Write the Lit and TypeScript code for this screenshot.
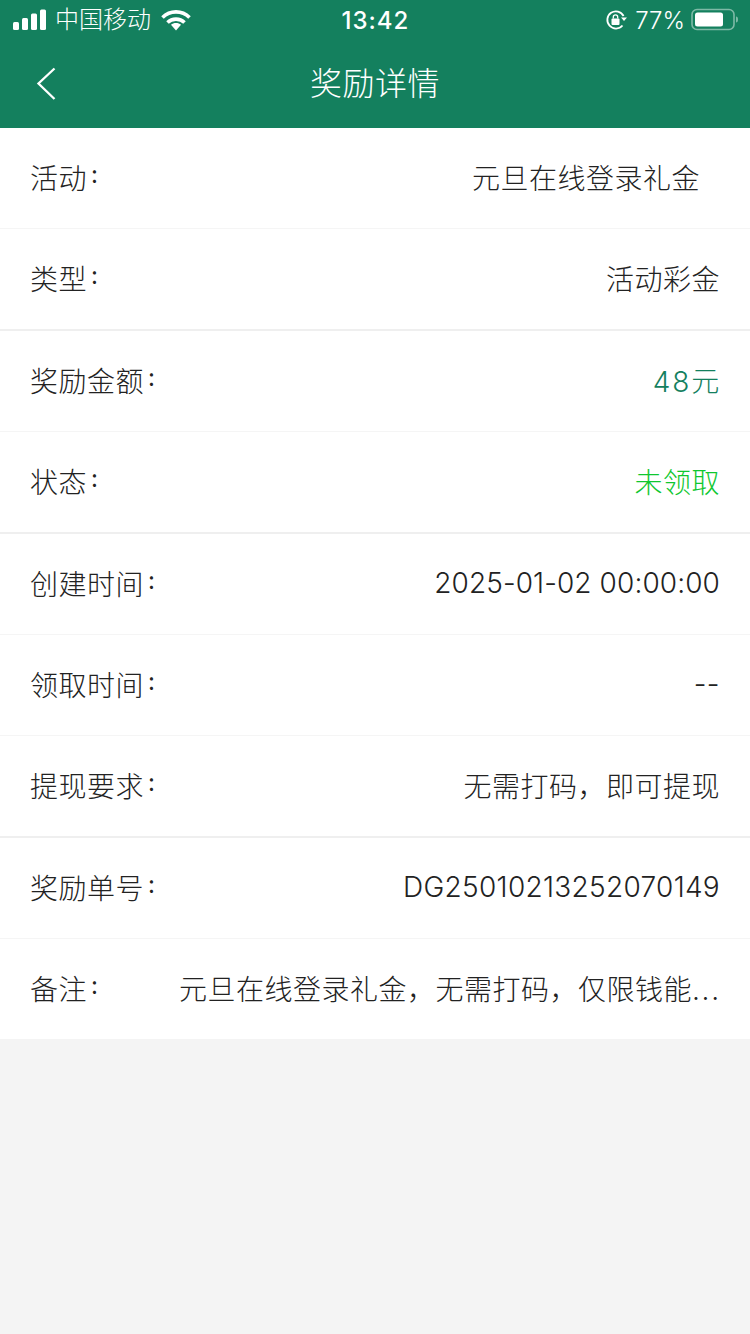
import { LitElement, html, css, svg } from "lit";
import { customElement } from "lit/decorators.js";

type Row = { label: string; value: string; tail?: string; cls?: string; sep?: string };

const rows: Row[] = [
  { label: "活动", value: "元旦在线登录礼金", cls: "inset" },
  { label: "类型", value: "活动彩金", sep: "thick" },
  { label: "奖励金额", value: "48元", cls: "green" },
  { label: "状态", value: "未领取", cls: "bright", sep: "thick" },
  { label: "创建时间", value: "2025-01-02 00:00:00", cls: "num" },
  { label: "领取时间", value: "--" },
  { label: "提现要求", value: "无需打码\uFF0C即可提现", sep: "thick" },
  { label: "奖励单号", value: "DG25010213252070149", cls: "code" },
  { label: "备注", value: "元旦在线登录礼金\uFF0C无需打码\uFF0C仅限钱能", tail: "...", sep: "none" },
];

@customElement("app-root")
export class AppRoot extends LitElement {
  static styles = css`
    :host {
      display: block;
      width: 750px;
      height: 1334px;
      background: #f4f4f4;
      font-family: "Inter", "Noto Sans CJK SC", sans-serif;
      overflow: hidden;
    }
    .header { background: #14805e; height: 128px; color: #fff; display: flex; flex-direction: column; }
    .status { height: 40px; display: flex; align-items: center; position: relative; padding: 0 12px 0 13px; font-size: 24px; font-weight: 300; }
    .status .left, .status .right { display: flex; align-items: center; }
    .status .right { margin-left: auto; }
    .carrier { margin-left: 8px; line-height: 40px; }
    .wifi { margin-left: 10px; }
    .time { position: absolute; left: 1px; right: 0; text-align: center; font-weight: 500; font-size: 24px; letter-spacing: 1px; }
    .pct { margin: 0 6px 0 8px; font-size: 24px; font-weight: 300; }
    .nav { flex: 1; position: relative; display: flex; align-items: center; justify-content: center; font-size: 32px; font-weight: 300; letter-spacing: .5px; padding-bottom: 6px; }
    .back { position: absolute; left: 36px; top: 27px; }
    .row { height: 100px; background: #fff; display: flex; align-items: center; justify-content: space-between; padding: 0 30px; font-size: 28px; font-weight: 300; letter-spacing: .5px; color: #222; border-bottom: 1px solid #f5f5f5; }
    .row.thick { border-bottom: 2px solid #efefef; }
    .row.none { border-bottom: 0; }
    .label { display: flex; align-items: center; white-space: nowrap; flex: none; margin-top: -3px; }
    .colon { font-size: 24px; font-weight: 400; margin: -4px 0 0 4px; }
    .value { white-space: nowrap; text-align: right; margin-top: -2px; }
    .dots { letter-spacing: 1.800px; margin-right: -1px; }
    .inset { margin-right: 20px; }
    .green { color: #14805e; letter-spacing: 1.800px; margin-right: -1px; }
    .bright { color: #0fc730; }
    .num { letter-spacing: .1px; }
    .code { letter-spacing: .3px; }
  `;

  private signal() {
    return svg`<svg width="34" height="22" viewBox="0 0 34 22" fill="#fff">
      <rect x="0" y="13" width="6" height="8" rx="1.500"/>
      <rect x="9" y="9" width="6" height="12" rx="1.500"/>
      <rect x="18" y="4.500" width="6" height="16.500" rx="1.500"/>
      <rect x="27" y="0.500" width="6" height="20.500" rx="1.500"/>
    </svg>`;
  }

  private wifi() {
    return svg`<svg class="wifi" width="30" height="22" viewBox="0 0 30 22" fill="none" stroke="#fff" stroke-width="3.600">
      <path d="M1.500 8.500C9 1 21 1 28.500 8.500"/>
      <path d="M6.500 13.500C11 9 19 9 23.500 13.500"/>
      <path d="M10 15.800L15 21.500L20 15.800C17.500 13.500 12.500 13.500 10 15.800Z" fill="#fff" stroke="none"/>
    </svg>`;
  }

  private lock() {
    return svg`<svg width="22" height="22" viewBox="0 0 22 22" fill="none">
      <path d="M17.500 16.500A8.600 8.600 0 1 1 18.600 7" stroke="#fff" stroke-width="1.800"/>
      <path d="M16 8.500H22L19 12Z" fill="#fff"/>
      <rect x="6.500" y="9.500" width="8" height="6.500" rx="1" fill="#fff"/>
      <path d="M8.300 9.500V8a2.200 2.200 0 0 1 4.400 0v1.500" stroke="#fff" stroke-width="1.300"/>
    </svg>`;
  }

  private battery() {
    return svg`<svg width="47" height="24" viewBox="0 0 47 24">
      <rect x="1" y="1.500" width="42" height="20" rx="5" fill="none" stroke="#fff" stroke-opacity=".45" stroke-width="1.600"/>
      <rect x="4" y="4.500" width="28" height="14" rx="2.500" fill="#fff"/>
      <path d="M45 8.500a2 3 0 0 1 0 6Z" fill="#fff" fill-opacity=".45"/>
    </svg>`;
  }

  render() {
    return html`
      <div class="header">
        <div class="status">
          <div class="left">${this.signal()}<span class="carrier">中国移动</span>${this.wifi()}</div>
          <div class="time">13:42</div>
          <div class="right">${this.lock()}<span class="pct">77%</span>${this.battery()}</div>
        </div>
        <div class="nav">
          <svg class="back" width="22" height="34" viewBox="0 0 22 34" fill="none" stroke="#fff" stroke-width="2.300">
            <path d="M18.500 1.500L2.500 16.500L18.500 32"/>
          </svg>
          奖励详情
        </div>
      </div>
      ${rows.map(
        (r) => html`<div class="row ${r.sep ?? ""}">
          <span class="label">${r.label}<span class="colon">:</span></span>
          <span class="value ${r.cls ?? ""}">${r.value}${r.tail ? html`<span class="dots">${r.tail}</span>` : ""}</span>
        </div>`
      )}
    `;
  }
}
